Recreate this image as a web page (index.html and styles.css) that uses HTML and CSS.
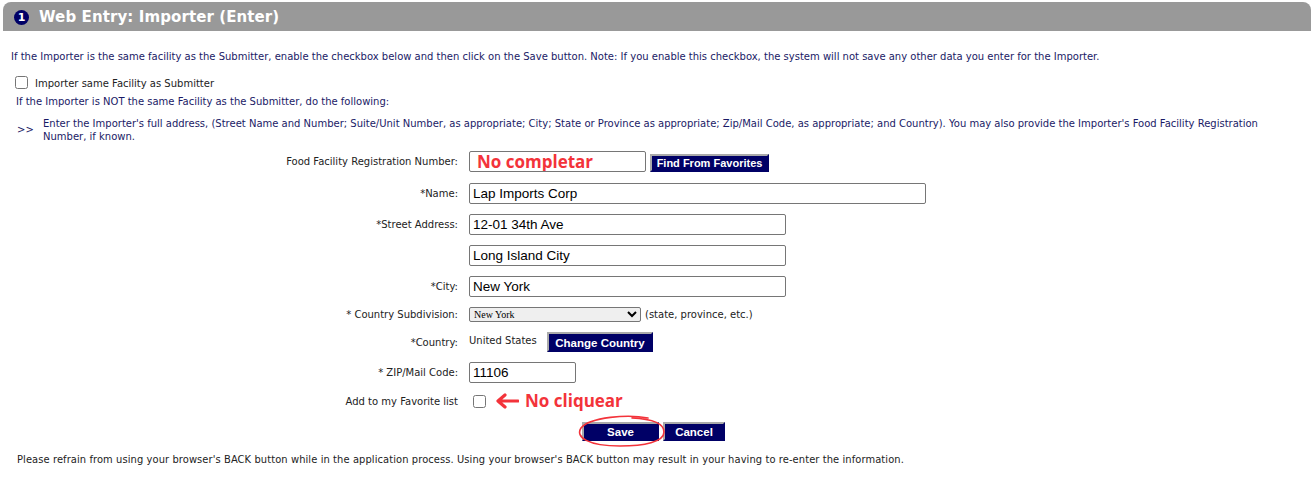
FILE: index.html
```html
<!DOCTYPE html>
<html lang="en">
<head>
  <meta charset="UTF-8" />
  <title>Web Entry: Importer (Enter)</title>
  <link rel="stylesheet" href="styles.css">
</head>
<body>

  <div class="titulo">
    <span class="numero">1</span>
    <span class="titulo-texto">Web Entry: Importer (Enter)</span>
  </div>

  <p class="intro">If the Importer is the same facility as the Submitter, enable the checkbox below and then click on the Save button. Note: If you enable this checkbox, the system will not save any other data you enter for the Importer.</p>

  <label class="mesma">
    <input type="checkbox" />
    <span>Importer same Facility as Submitter</span>
  </label>

  <p class="nao-mesma">If the Importer is NOT the same Facility as the Submitter, do the following:</p>

  <div class="passo">
    <span class="seta">&gt;&gt;</span>
    <span>Enter the Importer's full address, (Street Name and Number; Suite/Unit Number, as appropriate; City; State or Province as appropriate; Zip/Mail Code, as appropriate; and Country). You may also provide the Importer's Food Facility Registration Number, if known.</span>
  </div>

  <form class="formulario">
    <div class="linha linha-ffrn">
      <label class="rotulo">Food Facility Registration Number:</label>
      <div class="campo">
        <input type="text" class="txt curto nota" value="No completar" />
        <button type="button" class="btn btn-fav">Find From Favorites</button>
      </div>
    </div>

    <div class="linha">
      <label class="rotulo">*Name:</label>
      <div class="campo"><input type="text" class="txt largo" value="Lap Imports Corp" /></div>
    </div>

    <div class="linha">
      <label class="rotulo">*Street Address:</label>
      <div class="campo"><input type="text" class="txt medio" value="12-01 34th Ave" /></div>
    </div>

    <div class="linha">
      <label class="rotulo"></label>
      <div class="campo"><input type="text" class="txt medio" value="Long Island City" /></div>
    </div>

    <div class="linha">
      <label class="rotulo">*City:</label>
      <div class="campo"><input type="text" class="txt medio" value="New York" /></div>
    </div>

    <div class="linha linha-select">
      <label class="rotulo">* Country Subdivision:</label>
      <div class="campo">
        <select class="estado"><option>New York</option></select>
        <span class="dica">(state, province, etc.)</span>
      </div>
    </div>

    <div class="linha linha-pais">
      <label class="rotulo">*Country:</label>
      <div class="campo">
        <span class="pais">United States</span>
        <button type="button" class="btn btn-pais">Change Country</button>
      </div>
    </div>

    <div class="linha">
      <label class="rotulo">* ZIP/Mail Code:</label>
      <div class="campo"><input type="text" class="txt zip" value="11106" /></div>
    </div>

    <div class="linha linha-fav">
      <label class="rotulo">Add to my Favorite list</label>
      <div class="campo">
        <input type="checkbox" class="fav" />
        <svg class="flecha" width="24" height="16" viewBox="0 0 24 16">
          <path d="M23 8H4M10 2L3 8l7 6" fill="none" stroke="#f3333a" stroke-width="3.2" stroke-linecap="round" stroke-linejoin="round"/>
        </svg>
        <span class="aviso">No cliquear</span>
      </div>
    </div>

    <div class="acoes">
      <span class="salvar-wrap">
        <button type="button" class="btn btn-acao btn-salvar">Save</button>
        <svg class="circulo" width="92" height="34" viewBox="0 0 92 34">
          <path d="M72 3C52 -1 14 2 5 13C-1 22 12 31 44 31C68 31 88 27 88 17C88 9 77 4 56 3" fill="none" stroke="#f3333a" stroke-width="1.6" stroke-linecap="round"/>
        </svg>
      </span>
      <button type="button" class="btn btn-acao btn-cancelar">Cancel</button>
    </div>
  </form>

  <p class="rodape">Please refrain from using your browser's BACK button while in the application process. Using your browser's BACK button may result in your having to re-enter the information.</p>

</body>
</html>
```

FILE: styles.css
```css
* {
  box-sizing: border-box;
}

body {
  margin: 0;
  padding: 2px 3px;
  font-family: "DejaVu Sans", Verdana, sans-serif;
  font-size: 10px;
  color: #222;
  background: #fff;
}

/* TITULO */
.titulo {
  height: 29px;
  background-color: #999;
  border-radius: 8px 8px 0 0;
  display: flex;
  align-items: center;
  padding: 1px 0 0 11px;
}

.numero {
  width: 15px;
  height: 15px;
  border-radius: 50%;
  background-color: #000066;
  color: #fff;
  font-weight: bold;
  font-size: 11px;
  display: flex;
  align-items: center;
  justify-content: center;
  margin-right: 10px;
}

.titulo-texto {
  color: #fff;
  font-weight: bold;
  font-size: 15px;
  letter-spacing: 0.1px;
}

/* TEXTOS */
.intro {
  margin: 20px 0 0 8px;
  color: #1a1a66;
}

.mesma {
  display: flex;
  align-items: center;
  margin: 14px 0 0 11px;
}

.mesma input {
  margin: 0 7px 0 1px;
  width: 13px;
  height: 13px;
}

.mesma span {
  padding-top: 2px;
}

.nao-mesma {
  margin: 7px 0 0 13px;
  color: #1a1a66;
}

.passo {
  display: flex;
  margin: 10px 30px 0 14px;
  line-height: 13px;
  color: #1a1a66;
}

.seta {
  width: 26px;
  padding-top: 6px;
  flex-shrink: 0;
}

/* FORMULARIO */
.formulario {
  margin-top: 8px;
}

.linha {
  display: flex;
  align-items: center;
  min-height: 21px;
  margin-bottom: 10px;
}

.linha-ffrn {
  margin-bottom: 11px;
}

.rotulo {
  width: 455px;
  text-align: right;
  margin-right: 11px;
  color: #222;
}

.campo {
  display: flex;
  align-items: center;
}

.txt {
  height: 21px;
  border: 1px solid #767676;
  border-radius: 2px;
  padding: 0 3px;
  font-family: "Liberation Sans", Arial, sans-serif;
  font-size: 13.5px;
  color: #000;
}

.curto { width: 177px; }
.largo { width: 457px; }
.medio { width: 317px; }
.zip { width: 107px; }

.nota {
  color: #f3333a;
  font-family: "Open Sans", sans-serif;
  font-weight: bold;
  font-size: 17px;
  padding-left: 7px;
}

.btn {
  background-color: #000066;
  color: #fff;
  font-family: "Liberation Sans", Arial, sans-serif;
  font-weight: bold;
  font-size: 11px;
  border: 2px solid #000066;
  border-top-color: #aaa;
  border-left-color: #aaa;
  padding: 0;
  cursor: pointer;
}

.btn-fav {
  width: 119px;
  height: 18px;
  margin: 3px 0 0 4px;
}

.linha-select {
  min-height: 14px;
  margin-bottom: 10px;
}

.estado {
  width: 172px;
  height: 15px;
  font-family: "Liberation Serif", serif;
  font-size: 10px;
  border: 1px solid #767676;
  border-radius: 2px;
  padding: 0;
}

.dica {
  margin-left: 4px;
}

.linha-pais {
  min-height: 20px;
  margin-bottom: 10px;
}

.pais {
  width: 78px;
  padding-bottom: 3px;
}

.btn-pais {
  width: 106px;
  height: 20px;
  font-size: 11.5px;
  padding-top: 2px;
}

.linha-fav {
  min-height: 16px;
  margin: 2px 0 13px;
}

.fav {
  width: 13px;
  height: 13px;
  margin: 0 9px 0 4px;
}

.flecha {
  margin-right: 6px;
}

.aviso {
  color: #f3333a;
  font-family: "Open Sans", sans-serif;
  font-weight: bold;
  font-size: 17px;
  line-height: 16px;
}

.acoes {
  display: flex;
  padding-left: 579px;
  gap: 4px;
}

.btn-acao {
  height: 19px;
  font-size: 11.5px;
  padding-top: 1px;
}

.btn-salvar {
  width: 77px;
}

.btn-cancelar {
  width: 62px;
}

.salvar-wrap {
  position: relative;
  display: inline-block;
}

.circulo {
  position: absolute;
  left: -6px;
  top: -7px;
  pointer-events: none;
}

.rodape {
  margin: 12px 0 0 14px;
  font-family: "DejaVu Sans Condensed", "DejaVu Sans", sans-serif;
  font-size: 11px;
  letter-spacing: 0.1px;
  color: #222;
}
```
